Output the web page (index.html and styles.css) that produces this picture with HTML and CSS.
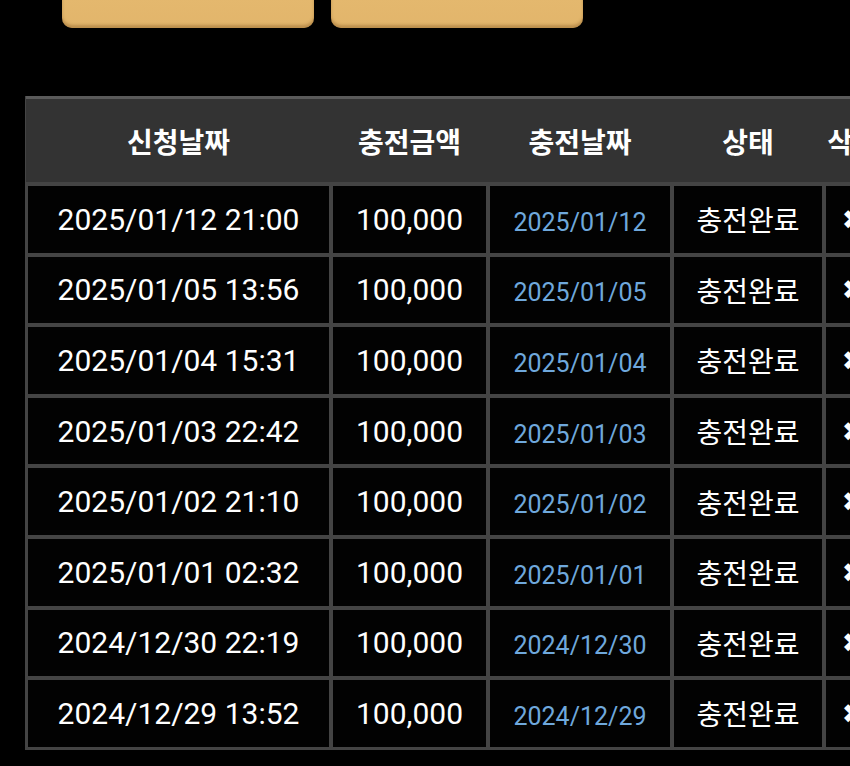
FILE: index.html
```html
<!DOCTYPE html>
<html lang="ko">
<head>
  <meta charset="UTF-8" />
  <title>충전내역</title>
  <link rel="stylesheet" href="styles.css">
</head>
<body>

  <div class="page">
    <div class="btn-row">
      <button class="gold-btn"></button>
      <button class="gold-btn"></button>
    </div>

    <table id="charge-table">
      <colgroup>
        <col class="c-req">
        <col class="c-amt">
        <col class="c-date">
        <col class="c-state">
        <col class="c-del">
      </colgroup>
      <thead>
        <tr>
          <th>신청날짜</th>
          <th>충전금액</th>
          <th>충전날짜</th>
          <th>상태</th>
          <th>삭제</th>
        </tr>
      </thead>
      <tbody></tbody>
    </table>
  </div>

  <script>
    // charge history rows
    const history = [
      ["2025/01/12 21:00", "2025/01/12"],
      ["2025/01/05 13:56", "2025/01/05"],
      ["2025/01/04 15:31", "2025/01/04"],
      ["2025/01/03 22:42", "2025/01/03"],
      ["2025/01/02 21:10", "2025/01/02"],
      ["2025/01/01 02:32", "2025/01/01"],
      ["2024/12/30 22:19", "2024/12/30"],
      ["2024/12/29 13:52", "2024/12/29"]
    ];

    const tbody = document.querySelector("#charge-table tbody");
    history.forEach(item => {
      const row = document.createElement("tr");
      row.innerHTML = `
        <td class="req">${item[0]}</td>
        <td class="amt">100,000</td>
        <td class="done">${item[1]}</td>
        <td class="state">충전완료</td>
        <td class="del">&#10006;</td>
      `;
      tbody.appendChild(row);
    });
  </script>

</body>
</html>
```

FILE: styles.css
```css
html, body {
  margin: 0;
  padding: 0;
  background-color: #000;
}

body {
  font-family: Roboto, "Noto Sans CJK KR", sans-serif;
  color: white;
}

.page {
  width: 850px;
  height: 766px;
  overflow: hidden;
}

.btn-row {
  display: flex;
  gap: 17px;
  margin: -32px 0 0 62px;
}

.gold-btn {
  width: 252px;
  height: 60px;
  border: none;
  border-radius: 10px;
  background: linear-gradient(#e6bb71, #e2b56b);
  box-shadow: inset 0 -3px 3px rgba(140, 95, 40, 0.45), 0 2px 3px rgba(0, 0, 0, 0.6);
}

table {
  margin: 68px 0 0 25px;
  width: 858px;
  table-layout: fixed;
  border-collapse: separate;
  border-spacing: 0;
  border: 1px solid #444;
  border-top: none;
}

.c-req { width: 305px; }
.c-amt { width: 157px; }
.c-date { width: 184px; }
.c-state { width: 152px; }
.c-del { width: 58px; }

th {
  height: 88px;
  box-sizing: border-box;
  padding: 0;
  background-color: #333;
  border-top: 3px solid #5a5a5a;
  border-bottom: 2px solid #444;
  font-family: "Noto Sans CJK KR", sans-serif;
  font-size: 28px;
  font-weight: bold;
  text-align: center;
  white-space: nowrap;
  overflow: visible;
}

tbody tr {
  height: 70.6px;
}

td {
  padding: 0;
  border: 2px solid #444;
  background-color: #020202;
  text-align: center;
  vertical-align: middle;
  white-space: nowrap;
}

td.req,
td.amt {
  font-size: 30px;
}

td.done {
  font-size: 25px;
  color: #6fa8dc;
  padding-top: 6px;
}

td.state {
  font-family: "Noto Sans CJK KR", sans-serif;
  font-size: 28px;
}

td.del {
  font-family: "DejaVu Sans", sans-serif;
  font-size: 27px;
}
```
